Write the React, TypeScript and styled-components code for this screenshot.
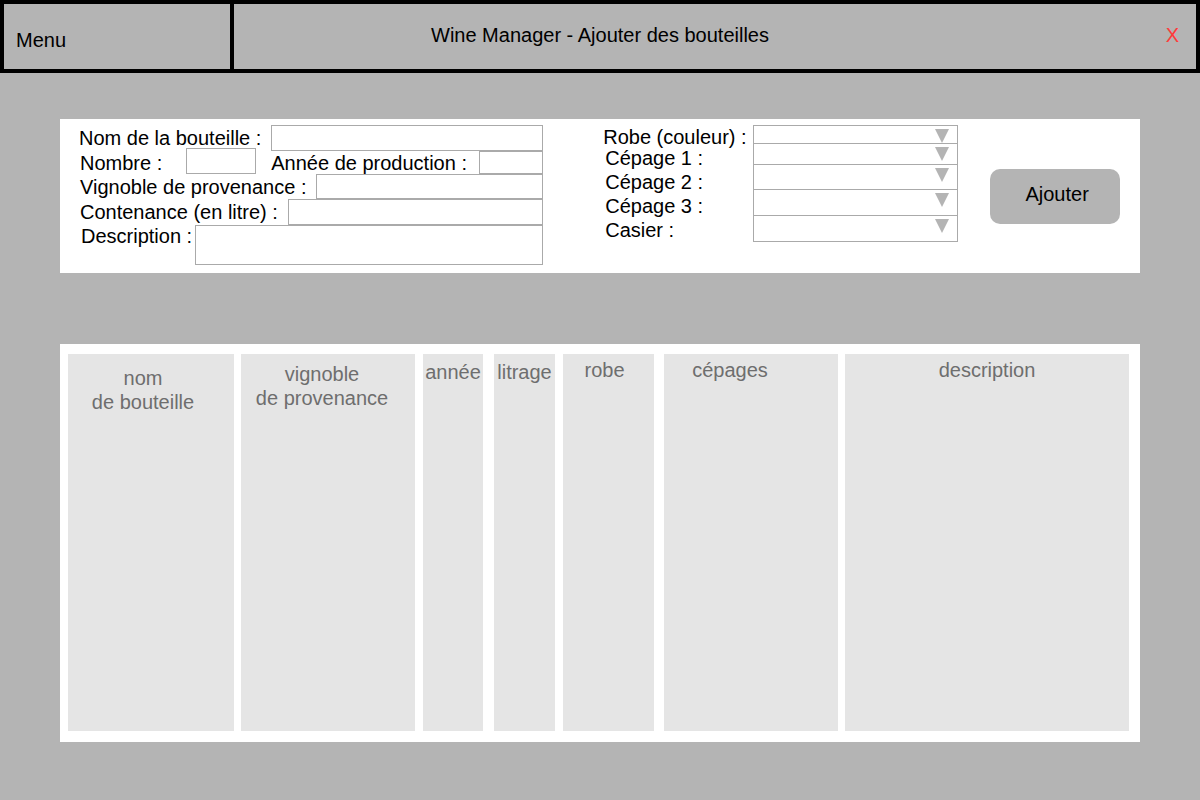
import styled, { createGlobalStyle } from "styled-components";

const GlobalStyle = createGlobalStyle`
  html, body {
    margin: 0;
    padding: 0;
    background-color: #b4b4b4;
  }
  body {
    font-family: "Liberation Sans", Arial, sans-serif;
    color: #000;
  }
`;

const Page = styled.div`
  width: 1200px;
  height: 800px;
  background-color: #b4b4b4;
  overflow: hidden;
`;

const Header = styled.header`
  display: flex;
  height: 73px;
  box-sizing: border-box;
  border: 4px solid #000;
  font-size: 20px;
`;

const MenuCell = styled.div`
  width: 230px;
  border-right: 4px solid #000;
  padding: 25px 0 0 12px;
  box-sizing: border-box;
`;

const TitleCell = styled.div`
  flex: 1;
  display: flex;
  align-items: flex-start;
  padding-top: 20px;
`;

const Title = styled.div`
  padding-left: 197px;
`;

const Close = styled.span`
  margin-left: auto;
  margin-right: 17px;
  color: #ff3b3b;
`;

const FormPanel = styled.section`
  display: flex;
  align-items: flex-start;
  margin: 46px 60px 0;
  height: 154px;
  box-sizing: border-box;
  padding: 6px 20px 0 19px;
  background-color: #fff;
  font-size: 20px;
`;

const LeftFields = styled.div`
  width: 465px;
  display: flex;
  flex-direction: column;
`;

const FieldRow = styled.div<{ $h: number; $shift?: number; $top?: boolean }>`
  display: flex;
  align-items: ${(p) => (p.$top ? "flex-start" : "center")};
  height: ${(p) => p.$h}px;
  padding-left: ${(p) => p.$shift ?? 0}px;
`;

const Label = styled.label<{ $gap?: number; $before?: number }>`
  white-space: nowrap;
  line-height: 22px;
  margin-left: ${(p) => p.$before ?? 0}px;
  margin-right: ${(p) => p.$gap ?? 10}px;
`;

const Input = styled.div<{ $w?: number; $rise?: number }>`
  ${(p) => (p.$w ? `width: ${p.$w}px;` : "flex: 1;")}
  align-self: stretch;
  margin-top: ${(p) => -(p.$rise ?? 0)}px;
  box-sizing: border-box;
  border: 1px solid #aaaaaa;
  background-color: #fff;
`;

const RightFields = styled.div`
  margin-left: 60px;
  display: flex;
  flex-direction: column;
`;

const SelectRow = styled.div<{ $h: number }>`
  display: flex;
  height: ${(p) => p.$h}px;
`;

const SelectLabel = styled.span<{ $shift: number; $drop: number }>`
  width: 150px;
  padding-left: ${(p) => p.$shift}px;
  box-sizing: border-box;
  line-height: 20px;
  margin-top: ${(p) => p.$drop}px;
  white-space: nowrap;
`;

const Select = styled.div<{ $first?: boolean }>`
  position: relative;
  width: 205px;
  box-sizing: border-box;
  border: 1px solid #aaaaaa;
  border-top-width: ${(p) => (p.$first ? 1 : 0)}px;
  &::after {
    content: "";
    position: absolute;
    right: 8px;
    top: 3px;
    border-left: 7.5px solid transparent;
    border-right: 7.5px solid transparent;
    border-top: 14px solid #b4b4b4;
  }
`;

const AddButton = styled.button`
  margin: 44px 0 0 32px;
  width: 130px;
  height: 55px;
  border: none;
  border-radius: 10px;
  background-color: #b4b4b4;
  font-family: "Liberation Sans", Arial, sans-serif;
  font-size: 20px;
  color: #000;
  padding: 0 0 4px 4px;
`;

const TablePanel = styled.section`
  display: flex;
  gap: 8px;
  margin: 71px 60px 0;
  height: 398px;
  box-sizing: border-box;
  padding: 10px 11px 11px 8px;
  background-color: #fff;
`;

const Column = styled.div<{ $w: number; $gap: number; $top: number; $offset?: number }>`
  width: ${(p) => p.$w}px;
  margin-left: ${(p) => p.$gap}px;
  flex-shrink: 0;
  background-color: #e5e5e5;
  color: #6e6e6e;
  font-size: 20px;
  line-height: 24px;
  text-align: center;
  padding-top: ${(p) => p.$top}px;
  padding-right: ${(p) => p.$offset ?? 0}px;
  box-sizing: border-box;
  white-space: nowrap;
`;

const columns = [
  { title: ["nom", "de bouteille"], w: 166, gap: 0, top: 12, offset: 16 },
  { title: ["vignoble", "de provenance"], w: 174, gap: -1, top: 8, offset: 12 },
  { title: ["année"], w: 60, gap: 0, top: 6 },
  { title: ["litrage"], w: 61, gap: 3, top: 6 },
  { title: ["robe"], w: 91, gap: 0, top: 4, offset: 8 },
  { title: ["cépages"], w: 174, gap: 2, top: 4, offset: 42 },
  { title: ["description"], w: 284, gap: -1, top: 4 },
];

const selects = [
  { label: "Robe (couleur) :", h: 19, shift: 0, drop: 2 },
  { label: "Cépage 1 :", h: 21, shift: 2, drop: 4 },
  { label: "Cépage 2 :", h: 25, shift: 2, drop: 7 },
  { label: "Cépage 3 :", h: 26, shift: 2, drop: 6 },
  { label: "Casier :", h: 26, shift: 2, drop: 4 },
];

export default function App() {
  return (
    <Page>
      <GlobalStyle />
      <Header>
        <MenuCell>Menu</MenuCell>
        <TitleCell>
          <Title>Wine Manager - Ajouter des bouteilles</Title>
          <Close>X</Close>
        </TitleCell>
      </Header>

      <FormPanel>
        <LeftFields>
          <FieldRow $h={26}>
            <Label>Nom de la bouteille :</Label>
            <Input />
          </FieldRow>
          <FieldRow $h={23} $shift={1}>
            <Label $gap={24}>Nombre :</Label>
            <Input $w={70} $rise={3} />
            <Label $before={15} $gap={12}>Année de production :</Label>
            <Input />
          </FieldRow>
          <FieldRow $h={25} $shift={1}>
            <Label>Vignoble de provenance :</Label>
            <Input />
          </FieldRow>
          <FieldRow $h={26} $shift={1}>
            <Label>Contenance (en litre) :</Label>
            <Input />
          </FieldRow>
          <FieldRow $h={40} $shift={2} $top>
            <Label $gap={3}>Description :</Label>
            <Input />
          </FieldRow>
        </LeftFields>

        <RightFields>
          {selects.map((s, i) => (
            <SelectRow key={s.label} $h={s.h}>
              <SelectLabel $shift={s.shift} $drop={s.drop}>
                {s.label}
              </SelectLabel>
              <Select $first={i === 0} />
            </SelectRow>
          ))}
        </RightFields>

        <AddButton>Ajouter</AddButton>
      </FormPanel>

      <TablePanel>
        {columns.map((c) => (
          <Column key={c.title.join(" ")} $w={c.w} $gap={c.gap} $top={c.top} $offset={c.offset}>
            {c.title.map((line) => (
              <div key={line}>{line}</div>
            ))}
          </Column>
        ))}
      </TablePanel>
    </Page>
  );
}
